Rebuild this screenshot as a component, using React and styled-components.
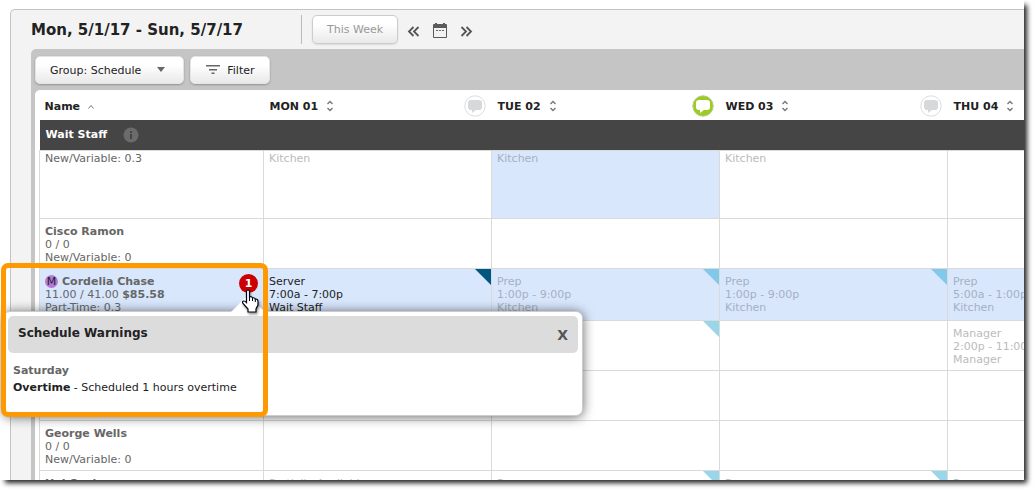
import React from "react";
import styled, { createGlobalStyle } from "styled-components";

const GlobalStyle = createGlobalStyle`
  * {
    box-sizing: border-box;
  }

  body {
    margin: 0;
    background: #fff;
    color: #222;
    font-family: "DejaVu Sans", Verdana, sans-serif;
    font-size: 11px;
    line-height: 13px;
  }

  button {
    font-family: inherit;
  }
`;

const StyledPage = styled.div`
  height: 100vh;
  padding: 0 10px 10px 0;
  overflow: hidden;
`;

const StyledFrame = styled.div`
  position: relative;
  height: 100%;
`;

const StyledFrameShadow = styled.div`
  position: absolute;
  top: 4px;
  left: 4px;
  right: 0;
  bottom: 0;
  box-shadow: 2px 2px 5px 1px #222;
`;

const StyledViewport = styled.div`
  position: relative;
  height: 100%;
  padding: 9px 0 0 10px;
  overflow: hidden;
  background: #fff;
`;

const StyledPanel = styled.main`
  height: 100%;
  padding-left: 20px;
  overflow: hidden;
  background: #f3f3f3;
  border: 1px solid #c3c3c3;
  border-width: 1px 0 0 1px;
  border-top-left-radius: 5px;
`;

const StyledTopBar = styled.header`
  display: flex;
  align-items: center;
  height: 39px;
`;

const StyledDateRange = styled.h1`
  width: 270px;
  margin: 0;
  font-size: 15px;
  line-height: 18px;
  white-space: nowrap;
`;

const StyledDivider = styled.div`
  width: 1px;
  height: 29px;
  margin-right: 10px;
  background: #bbb;
`;

const StyledButton = styled.button`
  display: flex;
  align-items: center;
  justify-content: center;
  gap: 6px;
  height: ${(props) => (props.$muted ? 29 : 28)}px;
  padding: 0 14px;
  color: ${(props) => (props.$muted ? "#999" : "#222")};
  font-size: 11px;
  background: linear-gradient(#fff, #fff 30%, #e9e9e9);
  border: 1px solid ${(props) => (props.$muted ? "#ccc" : "#e4e4e4")};
  border-radius: 5px;
  box-shadow: 0 1px 2px rgba(0, 0, 0, ${(props) => (props.$muted ? 0.1 : 0.25)});
  white-space: nowrap;
`;

const StyledCaret = styled.svg`
  margin-left: 6px;
`;

const StyledNav = styled.nav`
  display: flex;
  gap: 10px;
  margin-left: 8px;
  padding-top: 2px;
`;

const StyledIconButton = styled.button`
  display: flex;
  padding: 0;
  background: none;
  border: none;
`;

const StyledBoard = styled.section`
  padding: 7px 0 0 4px;
  background: #c5c5c5;
  border-top-left-radius: 5px;
`;

const StyledToolbar = styled.div`
  display: flex;
  gap: 6px;
  height: 34px;
`;

const StyledCard = styled.div`
  padding-left: 4px;
  overflow: hidden;
  background: #fff;
  border-top-left-radius: 5px;
`;

const StyledTable = styled.table`
  width: 1137px;
  table-layout: fixed;
  border-collapse: collapse;
`;

const StyledHeadCell = styled.th`
  width: ${(props) => (props.$name ? 224 : 228)}px;
  height: 30px;
  padding: 2px 6px 0 ${(props) => (props.$name ? 5 : 6)}px;
  text-align: left;
`;

const StyledHeadContent = styled.div`
  display: flex;
  align-items: center;
  gap: 8px;
`;

const StyledComment = styled.button`
  display: flex;
  margin-left: auto;
  padding: 0;
  background: none;
  border: none;
`;

const StyledGroupCell = styled.th`
  height: 30px;
  padding: 0 6px;
  color: #fff;
  text-align: left;
  background: #454545;
`;

const StyledGroupContent = styled.div`
  display: flex;
  align-items: center;
  gap: 16px;
`;

const StyledRow = styled.tr`
  height: ${(props) => props.$height}px;
  background: ${(props) => (props.$active ? "#d9e7fd" : "#fff")};
`;

const StyledCell = styled.td`
  position: relative;
  padding: ${(props) => (props.$scrolled ? 1 : 6)}px 5px 0;
  color: ${(props) => props.$color || "#666"};
  vertical-align: top;
  background: ${(props) => (props.$active ? "#d9e7fd" : "transparent")};
  border: 1px solid #dadada;
  white-space: nowrap;
`;

const StyledCorner = styled.span`
  position: absolute;
  top: 0;
  right: 0;
  border-top: 16px solid ${(props) => props.$color};
  border-left: 16px solid transparent;
`;

const StyledMinor = styled.span`
  display: inline-block;
  width: 13px;
  height: 13px;
  margin-right: 4px;
  color: #222;
  font-weight: normal;
  text-align: center;
  background: #b678d8;
  border-radius: 50%;
`;

const StyledWarningCount = styled.button`
  position: absolute;
  top: 5px;
  right: 5px;
  width: 19px;
  height: 19px;
  padding: 0;
  color: #fff;
  font-size: 11px;
  font-weight: bold;
  background: #c00;
  border: none;
  border-radius: 50%;
`;

const StyledPopover = styled.section`
  position: absolute;
  top: 311px;
  left: 3px;
  width: 580px;
  height: 105px;
  padding: 4px;
  background: #fff;
  border: 1px solid #ccc;
  border-radius: 7px;
  box-shadow: 0 1px 12px rgba(0, 0, 0, 0.6);
`;

const StyledPopoverArrow = styled.svg`
  position: absolute;
  top: -18px;
  left: 225px;
`;

const StyledPopoverHeader = styled.header`
  display: flex;
  align-items: center;
  justify-content: space-between;
  height: 37px;
  padding: 0 10px;
  background: #dcdcdc;
  border-radius: 5px;
`;

const StyledPopoverTitle = styled.h2`
  margin: 0;
  padding-bottom: 4px;
  font-size: 12px;
  line-height: 16px;
`;

const StyledClose = styled.button`
  padding: 0;
  color: #555;
  font-size: 14px;
  font-weight: bold;
  background: none;
  border: none;
`;

const StyledPopoverBody = styled.div`
  padding: 9px 5px;
  line-height: 17px;
`;

const StyledDay = styled.div`
  color: #666;
  font-weight: bold;
`;

const StyledHighlight = styled.div`
  position: absolute;
  top: 263px;
  left: 1px;
  width: 267px;
  height: 154px;
  border: 5px solid #f90;
  border-radius: 7px;
  pointer-events: none;
`;

const StyledCursor = styled.svg`
  position: absolute;
  top: 289px;
  left: 241px;
  filter: drop-shadow(1px 2px 1px rgba(0, 0, 0, 0.4));
`;

const DAYS = [
  { label: "MON 01" },
  { label: "TUE 02", hasComments: true },
  { label: "WED 03" },
  { label: "THU 04" },
];

const PREP = { lines: ["Prep", "1:00p - 9:00p", "Kitchen"], color: "#a5b0c1", corner: "#82c8ea" };
const KITCHEN = { lines: ["Kitchen"], color: "#bbb" };
const OPEN = { lines: [], corner: "#9ad6ea" };

const ROWS = [
  {
    id: 1,
    height: 68,
    isScrolled: true,
    details: ["New/Variable: 0.3"],
    shifts: [KITCHEN, { ...KITCHEN, color: "#a5b0c1", isActive: true }, KITCHEN, null],
  },
  {
    id: 2,
    height: 50,
    name: "Cisco Ramon",
    details: ["0 / 0", "New/Variable: 0"],
    shifts: [null, null, null, null],
  },
  {
    id: 3,
    height: 52,
    name: "Cordelia Chase",
    isActive: true,
    isMinor: true,
    hours: "11.00 / 41.00",
    cost: "$85.58",
    warnings: 1,
    details: ["Part-Time: 0.3"],
    shifts: [
      { lines: ["Server", "7:00a - 7:00p", "Wait Staff"], color: "#222", corner: "#00567f" },
      PREP,
      PREP,
      { lines: ["Prep", "5:00a - 1:00p", "Kitchen"], color: "#a5b0c1", corner: "#82c8ea" },
    ],
  },
  {
    id: 4,
    height: 50,
    details: [],
    shifts: [
      null,
      OPEN,
      null,
      { lines: ["Manager", "2:00p - 11:00p", "Manager"], color: "#bbb", corner: "#9ad6ea" },
    ],
  },
  { id: 5, height: 50, details: [], shifts: [null, null, null, null] },
  {
    id: 6,
    height: 50,
    name: "George Wells",
    details: ["0 / 0", "New/Variable: 0"],
    shifts: [null, null, null, null],
  },
  {
    id: 7,
    height: 50,
    name: "Hal Cooke",
    details: [],
    shifts: [
      { lines: ["Partially Available"], color: "#bbb" },
      { lines: ["Prep"], color: "#bbb", corner: "#9ad6ea" },
      { lines: ["Prep"], color: "#bbb", corner: "#9ad6ea" },
      { lines: ["Prep"], color: "#bbb" },
    ],
  },
];

const ChevronsIcon = ({ isRight }) => (
  <svg width="16" height="16" viewBox="0 0 16 16" fill="none" stroke="#555" strokeWidth="1.8">
    {isRight ? (
      <path d="M3.5 4L8 8.5L3.5 13M8.5 4L13 8.5L8.5 13" />
    ) : (
      <path d="M7.5 4L3 8.5L7.5 13M12.5 4L8 8.5L12.5 13" />
    )}
  </svg>
);

const CalendarIcon = () => (
  <svg width="16" height="16" viewBox="0 0 16 16">
    <path d="M2 1H14Q15 1 15 2V14Q15 15 14 15H2Q1 15 1 14V2Q1 1 2 1Z" fill="#5a5a5a" />
    <path d="M2 5H14V14H2Z" fill="#f3f3f3" />
    <path d="M3 0H5V3H3ZM11 0H13V3H11Z" fill="#5a5a5a" />
    <path d="M4 7h2v1H4zM7 7h2v1H7zM10 7h2v1h-2z" fill="#666" />
  </svg>
);

const SortIcon = () => (
  <svg width="8" height="12" viewBox="0 0 8 12" fill="none" stroke="#777" strokeWidth="1.4">
    <path d="M1.5 4L4 1.5L6.5 4M1.5 8L4 10.5L6.5 8" />
  </svg>
);

const CommentIcon = ({ isActive }) => (
  <svg width="22" height="22" viewBox="0 0 22 22">
    <circle
      cx="11"
      cy="11"
      r="10.2"
      fill={isActive ? "#9ccb22" : "#fff"}
      stroke={isActive ? "#b5c98a" : "#dcdcdc"}
    />
    <path
      d="M7 5H15Q18 5 18 8V12Q18 15 15 15H12L8 18V15H7Q4 15 4 12V8Q4 5 7 5Z"
      fill={isActive ? "#fff" : "#d6d8da"}
    />
  </svg>
);

const ScheduleRow = ({ row }) => (
  <StyledRow $height={row.height} $active={row.isActive}>
    <StyledCell $scrolled={row.isScrolled}>
      {row.name && (
        <div>
          {row.isMinor && <StyledMinor>M</StyledMinor>}
          <b>{row.name}</b>
        </div>
      )}
      {row.hours && (
        <div>
          {row.hours} <b>{row.cost}</b>
        </div>
      )}
      {row.details.map((line) => (
        <div key={line}>{line}</div>
      ))}
      {row.warnings && <StyledWarningCount>{row.warnings}</StyledWarningCount>}
    </StyledCell>
    {row.shifts.map((shift, index) => (
      <StyledCell
        key={index}
        $scrolled={row.isScrolled}
        $color={shift?.color}
        $active={shift?.isActive}
      >
        {shift?.lines.map((line, lineIndex) => (
          <div key={lineIndex}>{line}</div>
        ))}
        {shift?.corner && <StyledCorner $color={shift.corner} />}
      </StyledCell>
    ))}
    <StyledCell />
  </StyledRow>
);

const WarningsPopover = () => (
  <StyledPopover aria-labelledby="warnings-title">
    <StyledPopoverArrow width="38" height="19" viewBox="0 0 38 19">
      <path d="M1 19L19 1L37 19Z" fill="#fff" />
    </StyledPopoverArrow>
    <StyledPopoverHeader>
      <StyledPopoverTitle id="warnings-title">Schedule Warnings</StyledPopoverTitle>
      <StyledClose>X</StyledClose>
    </StyledPopoverHeader>
    <StyledPopoverBody>
      <StyledDay>Saturday</StyledDay>
      <div>
        <b>Overtime</b> - Scheduled 1 hours overtime
      </div>
    </StyledPopoverBody>
  </StyledPopover>
);

const App = () => (
  <>
    <GlobalStyle />
    <StyledPage>
      <StyledFrame>
        <StyledFrameShadow />
        <StyledViewport>
          <StyledPanel>
            <StyledTopBar>
              <StyledDateRange>Mon, 5/1/17 - Sun, 5/7/17</StyledDateRange>
              <StyledDivider />
              <StyledButton $muted>This Week</StyledButton>
              <StyledNav>
                <StyledIconButton aria-label="Previous week">
                  <ChevronsIcon />
                </StyledIconButton>
                <StyledIconButton aria-label="Pick a date">
                  <CalendarIcon />
                </StyledIconButton>
                <StyledIconButton aria-label="Next week">
                  <ChevronsIcon isRight />
                </StyledIconButton>
              </StyledNav>
            </StyledTopBar>
            <StyledBoard>
              <StyledToolbar>
                <StyledButton>
                  Group: Schedule
                  <StyledCaret width="16" height="8" viewBox="0 0 16 8">
                    <path d="M4 1H12L8 6Z" fill="#666" />
                  </StyledCaret>
                </StyledButton>
                <StyledButton>
                  <svg width="16" height="10" viewBox="0 0 16 10">
                    <path d="M1 0H15V1.500H1ZM4 4H12V5.500H4ZM6.500 7.500H9.500V9H6.500Z" fill="#666" />
                  </svg>
                  Filter
                </StyledButton>
              </StyledToolbar>
              <StyledCard>
                <StyledTable>
                  <thead>
                    <tr>
                      <StyledHeadCell $name>
                        <StyledHeadContent>
                          Name
                          <svg width="6" height="5" viewBox="0 0 6 5" fill="none" stroke="#777">
                            <path d="M0.5 4.5L3 1.5L5.5 4.5" />
                          </svg>
                        </StyledHeadContent>
                      </StyledHeadCell>
                      {DAYS.map((day) => (
                        <StyledHeadCell key={day.label}>
                          <StyledHeadContent>
                            {day.label}
                            <SortIcon />
                            <StyledComment aria-label={`Comments for ${day.label}`}>
                              <CommentIcon isActive={day.hasComments} />
                            </StyledComment>
                          </StyledHeadContent>
                        </StyledHeadCell>
                      ))}
                      <StyledHeadCell />
                    </tr>
                    <tr>
                      <StyledGroupCell colSpan={6}>
                        <StyledGroupContent>
                          Wait Staff
                          <svg width="16" height="16" viewBox="0 0 16 16">
                            <circle cx="8" cy="8" r="7.5" fill="#6b6b6b" />
                            <path d="M7 4h2v2H7zM7 7h2v5H7z" fill="#454545" />
                          </svg>
                        </StyledGroupContent>
                      </StyledGroupCell>
                    </tr>
                  </thead>
                  <tbody>
                    {ROWS.map((row) => (
                      <ScheduleRow key={row.id} row={row} />
                    ))}
                  </tbody>
                </StyledTable>
              </StyledCard>
            </StyledBoard>
          </StyledPanel>
          <WarningsPopover />
          <StyledHighlight />
          <StyledCursor width="20" height="26" viewBox="0 0 20 26">
            <path
              d="M5.500 13V2.500Q5.500 1 7 1T8.500 2.500V8Q10.500 7 11.500 9Q13.500 8.200 14.300 10Q17 9.800 17 12.500V16L15 20V23H7V20L2 14.500Q0.800 12.500 2.500 12Q4 11.800 5.500 13.500Z"
              fill="#fff"
              stroke="#001"
              strokeWidth="1.2"
            />
            <path d="M8.500 8v4M11.500 9v3M14.300 10v3" stroke="#001" />
          </StyledCursor>
        </StyledViewport>
      </StyledFrame>
    </StyledPage>
  </>
);

export default App;
